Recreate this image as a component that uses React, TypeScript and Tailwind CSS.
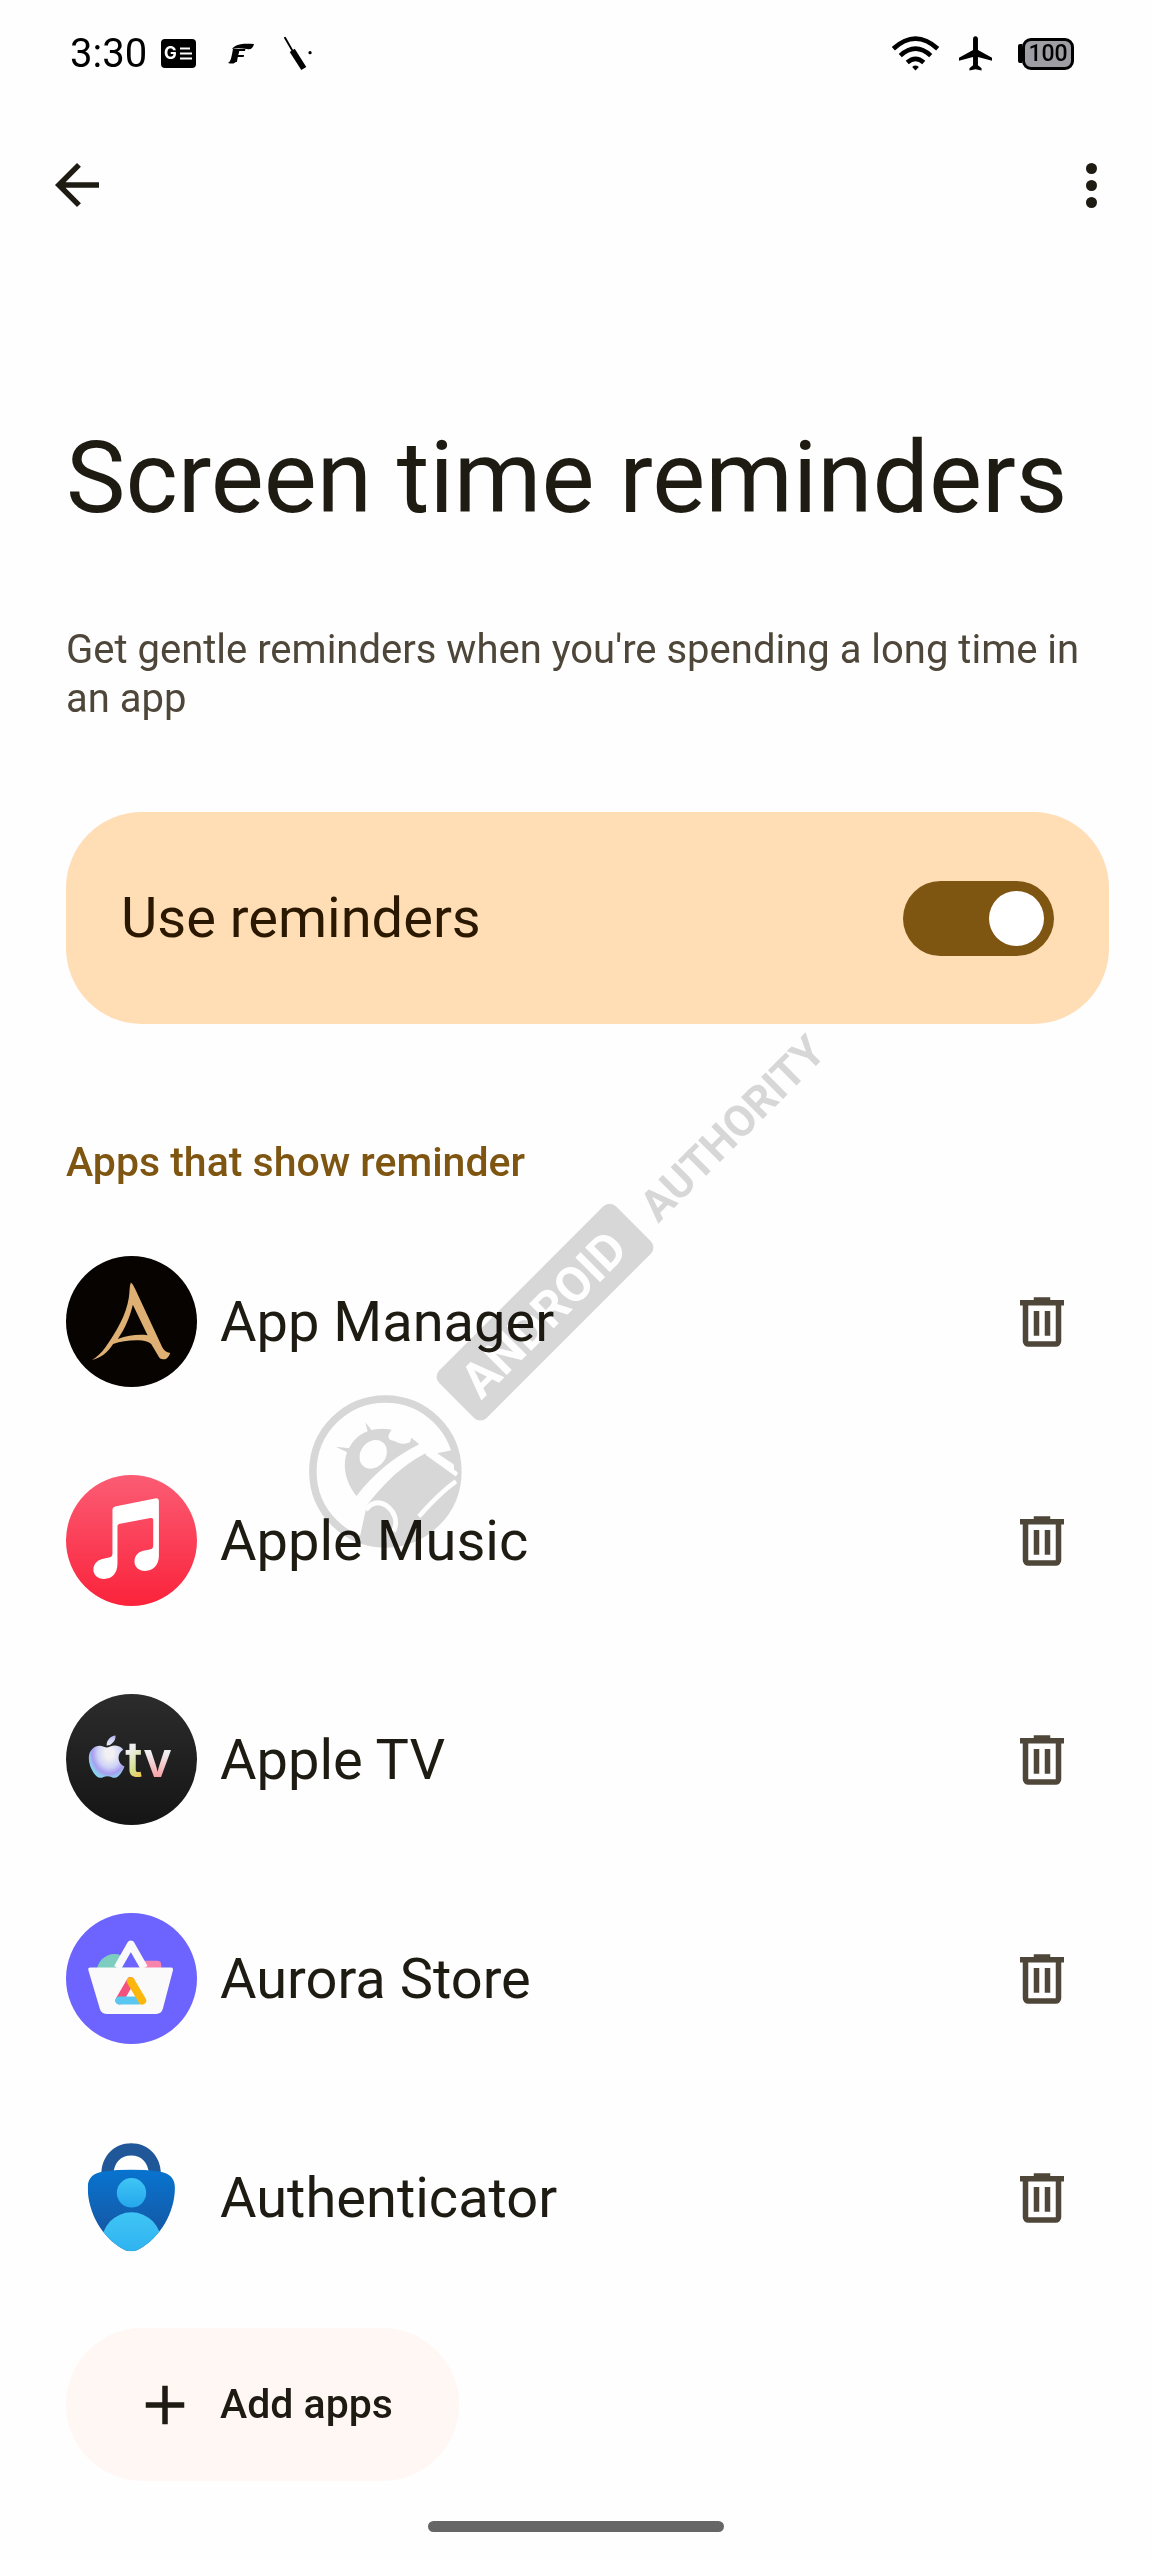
import { useState } from "react";
import { FaApple } from "react-icons/fa";

function AppManagerIcon() {
  return (
    <svg viewBox="49 46 392 392" className="size-full" aria-hidden="true">
      <circle cx="245" cy="242" r="196" fill="#070301" />
      <path
        fill="#deb074"
        d="M243 125c6 4 9 12 13 20l80 172c5 11 13 18 25 19-4 11-10 19-19 19-8 1-13-2-18-12l-20-34c-10-9-26-12-44-11-26 0-48 4-70 11-16 26-37 41-63 48 15-9 28-21 40-38 32-46 62-95 70-148 3-18 1-32 6-46zm6 67c-9 36-22 70-45 102 31-11 61-14 89-11z"
      />
    </svg>
  );
}

function AppleMusicIcon() {
  return (
    <svg viewBox="49 43 392 392" className="size-full" aria-hidden="true">
      <defs>
        <linearGradient id="music-bg" x1="0" y1="0" x2="0" y2="1">
          <stop offset="0" stopColor="#fb5c74" />
          <stop offset="1" stopColor="#fa233b" />
        </linearGradient>
      </defs>
      <circle cx="245" cy="239" r="196" fill="url(#music-bg)" />
      <path
        fill="#fff"
        d="M203 136l112-23c8-2 12 1 12 9v163c0 28-17 45-41 45-20 0-32-12-32-28 0-15 9-28 26-32l20-4c7-2 10-5 10-13v-74c0-6-3-8-9-7l-90 17c-6 1-8 4-8 9v110c0 30-17 46-40 46-20 0-32-12-32-28 0-15 10-28 26-32l21-4c7-2 10-5 10-12V148c0-8 5-10 15-12z"
      />
    </svg>
  );
}

function AppleTvIcon() {
  return (
    <svg viewBox="49 41 392 392" className="size-full" aria-hidden="true">
      <defs>
        <linearGradient id="tv-bg" x1="0" y1="0" x2="0" y2="1">
          <stop offset="0" stopColor="#2c2c2c" />
          <stop offset="1" stopColor="#151515" />
        </linearGradient>
        <radialGradient id="tv-apple" cx="0.58" cy="0.42" r="0.6">
          <stop offset="0.2" stopColor="#f2f0f2" />
          <stop offset="0.55" stopColor="#cfd4f6" />
          <stop offset="0.8" stopColor="#a99df0" />
          <stop offset="1" stopColor="#8ad3ee" />
        </radialGradient>
        <linearGradient id="tv-t" x1="0" y1="0" x2="0.3" y2="1">
          <stop offset="0.4" stopColor="#efefef" />
          <stop offset="0.75" stopColor="#d5e08a" />
          <stop offset="1" stopColor="#f5c24f" />
        </linearGradient>
        <linearGradient id="tv-v" x1="0" y1="0" x2="0" y2="1">
          <stop offset="0.4" stopColor="#efefef" />
          <stop offset="0.8" stopColor="#f6a3a8" />
        </linearGradient>
      </defs>
      <circle cx="245" cy="237" r="196" fill="url(#tv-bg)" />
      <FaApple x="98" y="156" size="145" fill="url(#tv-apple)" />
      <text x="226" y="288" fontFamily="Inter, sans-serif" fontSize="146" fontWeight="600" fill="url(#tv-t)">
        t
      </text>
      <text x="280" y="288" fontFamily="Inter, sans-serif" fontSize="146" fontWeight="600" fill="url(#tv-v)">
        v
      </text>
    </svg>
  );
}

function AuroraIcon() {
  return (
    <svg viewBox="49 38 392 392" className="size-full" aria-hidden="true">
      <circle cx="245" cy="234" r="196" fill="#6d64ff" />
      <circle cx="194" cy="214" r="53" fill="#7ccdbf" />
      <path d="M238 181h84q12 0 12 13v20h-96z" fill="#f884ad" />
      <path d="M203 202l40-70 40 70" fill="#6d64ff" stroke="#fafafa" strokeWidth="23" strokeLinejoin="round" />
      <path
        fill="#fafafa"
        d="M121 201h243q6 0 5 8l-30 115q-4 16-20 16H170q-16 0-20-16L116 209q-2-8 5-8z"
      />
      <g fill="none" strokeWidth="24" strokeLinecap="round">
        <path d="M209 299l33-57" stroke="#f4517f" />
        <path d="M209 300h57" stroke="#5ac7f2" />
        <path d="M243 242l34 58" stroke="#fcb70d" />
      </g>
    </svg>
  );
}

function AuthenticatorIcon() {
  return (
    <svg viewBox="49 35 392 392" className="size-full" aria-hidden="true">
      <defs>
        <linearGradient id="auth-shield" x1="0" y1="0" x2="0" y2="1">
          <stop offset="0" stopColor="#0775d1" />
          <stop offset="1" stopColor="#1a4f97" />
        </linearGradient>
        <linearGradient id="auth-user" x1="0" y1="0" x2="0" y2="1">
          <stop offset="0" stopColor="#40c5f5" />
          <stop offset="1" stopColor="#25a7ec" />
        </linearGradient>
        <clipPath id="auth-clip">
          <path d="M114 201c0-30 18-44 47-48 54-8 112-8 166 0 31 4 48 20 48 48 0 75-44 150-108 185-16 8-31 8-46 0-64-35-107-110-107-185z" />
        </clipPath>
      </defs>
      <path d="M155 160c0-52 38-91 89-91s89 39 89 91h-36c-2-34-22-55-53-55s-51 21-53 55z" fill="#1f5799" />
      <g clipPath="url(#auth-clip)">
        <path d="M110 140h270v260H110z" fill="url(#auth-shield)" />
        <circle cx="245" cy="217" r="44" fill="url(#auth-user)" />
        <ellipse cx="245" cy="371" rx="91" ry="96" fill="url(#auth-user)" />
      </g>
    </svg>
  );
}

function TrashIcon() {
  return (
    <svg viewBox="0 0 24 24" className="size-[66px]" fill="currentColor" aria-hidden="true">
      <path d="M7 21q-.825 0-1.412-.587T5 19V6H4V4h5V3h6v1h5v2h-1v13q0 .825-.587 1.413T17 21zM17 6H7v13h10zM9 17h2V8H9zm4 0h2V8h-2z" />
    </svg>
  );
}

function StatusBar() {
  return (
    <div className="flex h-[107px] items-center justify-between pl-[70px] pr-[78px] text-black">
      <div className="flex items-center">
        <span className="text-[40px] leading-none">3:30</span>
        <svg viewBox="0 0 35 29" className="ml-[14px] h-[29px] w-[35px]" aria-hidden="true">
          <rect width="35" height="29" rx="4" />
          <text x="3" y="20" fontFamily="Inter, sans-serif" fontSize="17" fontWeight="700" fill="#fff">
            G
          </text>
          <path d="M19 9.500h10M19 14.500h12M19 19.500h12" stroke="#fff" strokeWidth="2" />
        </svg>
        <svg viewBox="-3 -3 36 28" className="ml-7 h-7 w-9" aria-hidden="true">
          <path d="M5 6C8 1 16 0 27 1c-1 4-3 6-7 5-6-1-11-1-15 0z" />
          <path d="M6 6h7L9 18c-1 3-4 3-8 2 3-2 3-4 5-14z" />
          <text x="7" y="19" fontFamily="Liberation Sans, sans-serif" fontSize="18" fontWeight="700" fontStyle="italic">
            F
          </text>
        </svg>
        <svg viewBox="738 48 88 108" className="ml-6 h-9 w-[29px]" aria-hidden="true">
          <path d="M741 53l22 38" stroke="#000" strokeWidth="6" strokeLinecap="round" />
          <path d="M763 91l35 55" stroke="#000" strokeWidth="18" strokeLinejoin="round" />
          <circle cx="817" cy="98" r="5" />
        </svg>
      </div>
      <div className="flex items-center">
        <svg viewBox="97 46 142 105" className="h-[35px] w-[47px]" fill="none" stroke="#000" strokeWidth="14" aria-hidden="true">
          <path d="M101 84q67-61 134 0M122 105q46-42 92 0M143 126q25-22 50 0" />
          <path d="M158 139q10-8 20 0l-10 11z" fill="#000" stroke="none" />
        </svg>
        <svg viewBox="296 48 101 106" className="ml-5 h-[35px] w-[33px]" aria-hidden="true">
          <path d="M339 57q0-9 7.500-9t7.500 9v33l43 24v9l-43-11v25l11 9v7l-18.500-4-18.500 4v-7l11-9v-25l-43 11v-9l43-24z" />
        </svg>
        <div className="ml-[26px] flex items-center">
          <span className="h-[19px] w-1 rounded-l-xs bg-black" />
          <span className="flex h-8 w-[52px] items-center justify-center rounded-[9px] border-3 border-black bg-[#9e9da4] text-[23px] font-medium leading-none">
            100
          </span>
        </div>
      </div>
    </div>
  );
}

function Watermark() {
  return (
    <svg
      viewBox="0 0 1568 1568"
      className="pointer-events-none absolute left-[290px] top-[1000px] size-[560px] overflow-visible mix-blend-multiply"
      fill="#d8d8d8"
      aria-hidden="true"
    >
      <defs>
        <clipPath id="mark-clip">
          <circle cx="267" cy="1320" r="203" />
        </clipPath>
      </defs>
      <circle cx="267" cy="1320" r="203" fill="none" stroke="#d8d8d8" strokeWidth="21" />
      {/* head with antennas, eye and a bite */}
      <path d="M186 1389c-42-54-46-122 4-166 24-20 60-27 95-20-14 18-13 28 8 32 15 9 27 9 43 3l4-12 22 18c-73 36-128 84-176 145z" />
      <path d="M128 1251l45 5-10 12zM211 1182l22 28-14 5z" />
      <ellipse cx="233" cy="1272" rx="35" ry="43" transform="rotate(38 233 1272)" fill="#fff" />
      {/* body */}
      <g clipPath="url(#mark-clip)">
        <path d="M215 1415c46-60 98-112 165-146l95 68v130L355 1530H190z" />
        <path d="M412 1269l68-14v60z" />
        <path d="M383 1268l85 61M465 1348c-38 26-70 60-104 98" fill="none" stroke="#fff" strokeWidth="13" />
        <path d="M212 1428c24-32 56-22 74 4 14 22 12 38 4 56" fill="none" stroke="#fff" strokeWidth="14" />
      </g>
      <g transform="rotate(-45 714 874)">
        <rect x="364" y="780" width="700" height="188" rx="25" />
        <text x="413" y="923" fontFamily="Roboto, sans-serif" fontSize="137" fontWeight="700" fill="#fff">
          ANDROID
        </text>
        <text x="1113" y="923" fontFamily="Roboto, sans-serif" fontSize="122" fontWeight="700">
          AUTHORITY
        </text>
      </g>
    </svg>
  );
}

const initialApps = [
  { name: "App Manager", Icon: AppManagerIcon },
  { name: "Apple Music", Icon: AppleMusicIcon },
  { name: "Apple TV", Icon: AppleTvIcon },
  { name: "Aurora Store", Icon: AuroraIcon },
  { name: "Authenticator", Icon: AuthenticatorIcon },
];

export default function App() {
  const [enabled, setEnabled] = useState(true);
  const [apps, setApps] = useState(initialApps);

  const removeApp = (name: string) => {
    setApps((list) => list.filter((app) => app.name !== name));
  };

  return (
    <div className="relative flex min-h-screen flex-col bg-[#fefefe] font-[Roboto,sans-serif] text-[#1e1b13]">
      <StatusBar />

      <header className="flex items-center justify-between px-11 py-[45px]">
        <button type="button" aria-label="Back">
          <svg viewBox="0 0 24 24" className="size-[66px]" fill="currentColor" aria-hidden="true">
            <path d="M7.825 13l5.600 5.600L12 20l-8-8 8-8 1.425 1.400L7.825 11H20v2z" />
          </svg>
        </button>
        <button type="button" aria-label="More options" className="flex w-[34px] flex-col items-center gap-[6px]">
          <span className="size-[11px] rounded-full bg-current" />
          <span className="size-[11px] rounded-full bg-current" />
          <span className="size-[11px] rounded-full bg-current" />
        </button>
      </header>

      <main className="flex flex-1 flex-col pl-[66px] pr-[43px]">
        <h1 className="mt-[155px] text-[100px] leading-[120px]">Screen time reminders</h1>
        <p className="mt-[87px] text-[40px] leading-[49px] text-[#4d4639]">
          Get gentle reminders when you're spending a long time in an app
        </p>

        <label className="mt-[89px] flex h-[212px] cursor-pointer items-center justify-between rounded-[76px] bg-[#ffddb5] px-[55px] text-[#2a1800]">
          <span className="text-[56px] leading-none">Use reminders</span>
          <input
            type="checkbox"
            role="switch"
            className="peer sr-only"
            checked={enabled}
            onChange={(e) => setEnabled(e.target.checked)}
          />
          <span className="flex h-[75px] w-[151px] items-center rounded-full bg-[#9c8f80] px-[10px] peer-checked:justify-end peer-checked:bg-[#7f5512]">
            <span className="size-[55px] rounded-full bg-white" />
          </span>
        </label>

        <h2 className="mt-[114px] text-[41px] font-medium leading-[48px] text-[#7f5512]">
          Apps that show reminder
        </h2>

        <ul className="mt-[70px] flex flex-col gap-[88px]">
          {apps.map(({ name, Icon }) => (
            <li key={name} className="flex items-center">
              <span className="size-[131px] shrink-0">
                <Icon />
              </span>
              <span className="ml-[23px] flex-1 text-[56px] leading-none">{name}</span>
              <button
                type="button"
                aria-label={`Remove ${name}`}
                className="mr-[34px] text-[#4d4639]"
                onClick={() => removeApp(name)}
              >
                <TrashIcon />
              </button>
            </li>
          ))}
        </ul>

        <button
          type="button"
          className="mt-[65px] flex h-[153px] items-center gap-[22px] self-start rounded-full bg-[#fff7f3] px-[66px] text-[41px] font-medium"
        >
          <svg viewBox="0 0 24 24" className="size-[66px]" fill="currentColor" aria-hidden="true">
            <path d="M11 13H5v-2h6V5h2v6h6v2h-6v6h-2z" />
          </svg>
          Add apps
        </button>
      </main>

      <div className="mx-auto mb-7 mt-10 h-[11px] w-[296px] rounded-full bg-[#666]" />
      <Watermark />
    </div>
  );
}
